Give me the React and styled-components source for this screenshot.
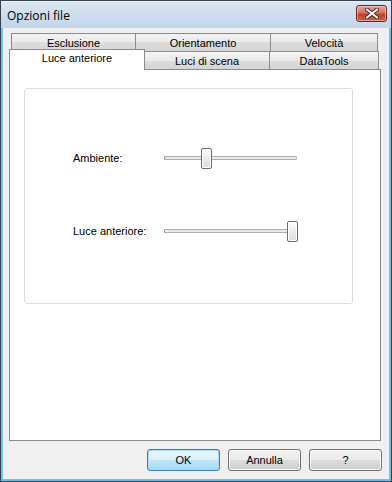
import React from "react";
import styled, { createGlobalStyle } from "styled-components";

const Global = createGlobalStyle`
  html, body { margin: 0; padding: 0; background: #ffffff; }
  body { font-family: "Liberation Sans", Arial, sans-serif; }
  * { box-sizing: border-box; }
`;

const Window = styled.div`
  width: 392px;
  height: 482px;
  border: 1px solid #34404d;
  display: flex;
  flex-direction: column;
  background: #c8d7ea;
`;

const TitleBar = styled.div`
  height: 27px;
  display: flex;
  align-items: center;
  justify-content: space-between;
  padding: 0 4px 0 6px;
  background: linear-gradient(#d9e5f3, #c4d5ea);
  border-top: 1px solid #eef4fb;
`;

const Title = styled.span`
  font-family: "Open Sans", "Liberation Sans", sans-serif;
  font-size: 12px;
  color: #000;
`;

const CloseButton = styled.div`
  width: 31px;
  height: 17px;
  margin-top: -4px;
  border: 1px solid #6d2a22;
  border-radius: 3px;
  background: linear-gradient(#e6a396 0%, #d27563 45%, #bd4430 55%, #c9604a 100%);
  box-shadow: inset 0 0 0 1px rgba(255, 220, 210, 0.5);
  display: flex;
  align-items: center;
  justify-content: center;
`;

const Body = styled.div`
  flex: 1;
  display: flex;
  flex-direction: column;
  background: #f0f0f0;
  border-left: 2px solid #74c1ec;
  border-right: 2px solid #74c1ec;
  border-bottom: 2px solid #74c1ec;
  padding: 5px 6px 7px 6px;
`;

const TabStrip = styled.div`
  height: 37px;
  display: flex;
  flex-direction: column;
  position: relative;
  z-index: 2;
`;

const TabRow = styled.div`
  display: flex;
  align-items: flex-end;
  padding-left: ${(p) => p.$indent}px;
  height: ${(p) => p.$h}px;
`;

const Tab = styled.div`
  width: ${(p) => p.$w}px;
  height: ${(p) => p.$h}px;
  margin-top: ${(p) => (p.$selected ? -2 : 0)}px;
  border: 1px solid #898c95;
  border-bottom: ${(p) => (p.$selected ? "none" : "1px solid #898c95")};
  margin-left: -1px;
  background: ${(p) =>
    p.$selected
      ? "#ffffff"
      : "linear-gradient(#f3f3f3 0%, #ebebeb 50%, #dddddd 50%, #d4d4d4 100%)"};
  font-size: 11px;
  color: #000;
  display: flex;
  justify-content: center;
  align-items: ${(p) => (p.$selected ? "flex-start" : "center")};
  padding-top: ${(p) => (p.$selected ? 2 : 0)}px;
  position: relative;
  z-index: ${(p) => (p.$selected ? 3 : 1)};
  &:first-child { margin-left: 0; }
`;

const Panel = styled.div`
  height: 372px;
  background: #ffffff;
  border: 1px solid #898c95;
  margin-left: 0;
  margin-right: 2px;
  margin-top: -1px;
  padding: 18px 0 0 14px;
  position: relative;
  z-index: 1;
`;

const Group = styled.div`
  width: 329px;
  height: 216px;
  border: 1px solid #d5dfe5;
  border-radius: 3px;
  display: grid;
  grid-template-columns: 91px 133px;
  grid-auto-rows: 20px;
  row-gap: 53px;
  padding: 59px 0 0 48px;
  align-items: center;
`;

const Label = styled.span`
  font-size: 11px;
  color: #000;
`;

const Slider = styled.div`
  position: relative;
  height: 20px;
  display: flex;
  align-items: center;
`;

const Track = styled.div`
  width: 100%;
  height: 4px;
  border: 1px solid #b0b0b0;
  border-left: 1px solid #9a9a9a;
  border-right: 1px solid #c8c8c8;
  background: #e7eaea;
  border-radius: 1px;
`;

const Thumb = styled.div`
  position: absolute;
  top: 0;
  width: 11px;
  height: 21px;
  border: 1px solid #6f6f6f;
  border-radius: 2px;
  background: linear-gradient(#fdfdfd 0%, #ececec 50%, #dedede 100%);
  box-shadow: inset 0 0 0 1px #ffffff;
`;

const ButtonRow = styled.div`
  display: flex;
  gap: 8px;
  justify-content: flex-end;
  margin-top: 8px;
  margin-right: 1px;
`;

const Button = styled.div`
  width: 73px;
  height: 22px;
  border: 1px solid ${(p) => (p.$default ? "#3c7fb1" : "#707070")};
  border-radius: 3px;
  background: ${(p) =>
    p.$default
      ? "linear-gradient(#eaf6fd 0%, #d9f0fc 50%, #bee6fd 50%, #a7d9f5 100%)"
      : "linear-gradient(#f2f2f2 0%, #ebebeb 50%, #dddddd 50%, #cfcfcf 100%)"};
  box-shadow: inset 0 0 0 1px ${(p) => (p.$default ? "#a6dcf7" : "#fcfcfc")};
  font-size: 11px;
  color: #000;
  display: flex;
  align-items: center;
  justify-content: center;
`;

function HSlider({ pos }) {
  return (
    <Slider>
      <Track />
      <Thumb style={{ left: `${pos}px` }} />
    </Slider>
  );
}

export default function App() {
  return (
    <>
      <Global />
      <Window>
        <TitleBar>
          <Title>Opzioni file</Title>
          <CloseButton>
            <svg width="14" height="11" viewBox="0 0 14 11">
              <path
                d="M2 1.5 L12 9.5 M12 1.5 L2 9.5"
                stroke="#5a1f18"
                strokeWidth="4"
                strokeLinecap="round"
              />
              <path
                d="M2 1.5 L12 9.5 M12 1.5 L2 9.5"
                stroke="#ffffff"
                strokeWidth="2.2"
                strokeLinecap="round"
              />
            </svg>
          </CloseButton>
        </TitleBar>
        <Body>
          <TabStrip>
            <TabRow $indent={2} $h={19}>
              <Tab $w={125} $h={19}>Esclusione</Tab>
              <Tab $w={136} $h={19}>Orientamento</Tab>
              <Tab $w={108} $h={19}>Velocità</Tab>
            </TabRow>
            <TabRow $indent={0} $h={18}>
              <Tab $selected $w={136} $h={21}>Luce anteriore</Tab>
              <Tab $w={126} $h={19}>Luci di scena</Tab>
              <Tab $w={110} $h={19}>DataTools</Tab>
            </TabRow>
          </TabStrip>
          <Panel>
            <Group>
              <Label>Ambiente:</Label>
              <HSlider pos={37} />
              <Label>Luce anteriore:</Label>
              <HSlider pos={123} />
            </Group>
          </Panel>
          <ButtonRow>
            <Button $default>OK</Button>
            <Button>Annulla</Button>
            <Button>?</Button>
          </ButtonRow>
        </Body>
      </Window>
    </>
  );
}
